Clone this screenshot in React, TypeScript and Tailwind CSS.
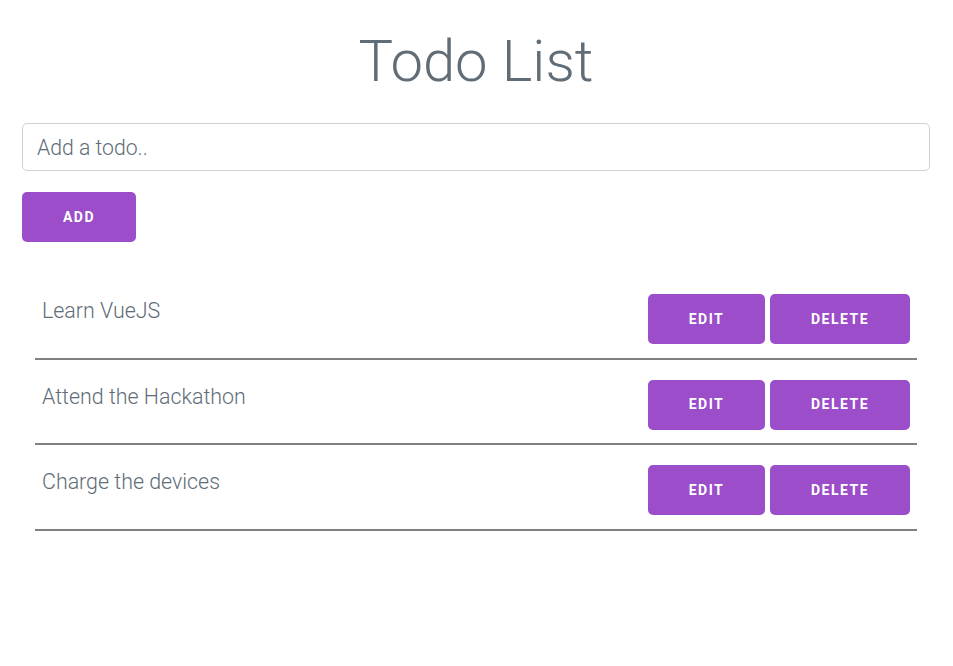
import React, { useState } from 'react';

type Todo = {
  id: number;
  text: string;
};

const initialTodos: Todo[] = [
  { id: 1, text: 'Learn VueJS' },
  { id: 2, text: 'Attend the Hackathon' },
  { id: 3, text: 'Charge the devices' },
];

const btn =
  'h-[50px] rounded-[5px] bg-[#9b4dca] text-[14px] font-bold uppercase tracking-[1.5px] text-white hover:bg-[#8a3fb8]';

const App: React.FC = () => {
  const [todos, setTodos] = useState<Todo[]>(initialTodos);
  const [draft, setDraft] = useState('');

  const handleAdd = () => {
    if (!draft.trim()) return;
    setTodos([...todos, { id: Date.now(), text: draft.trim() }]);
    setDraft('');
  };

  const handleDelete = (id: number) => {
    setTodos(todos.filter(todo => todo.id !== id));
  };

  return (
    <div className="min-h-screen bg-white font-['Roboto',sans-serif] font-light text-[#606c76]">
      <div className="pl-[22px] pr-[23px] pt-[25px]">
        <h1 className="text-center text-[58px] font-light leading-[72px] text-[#606c76]">
          Todo List
        </h1>

        <input
          value={draft}
          onChange={e => setDraft(e.target.value)}
          placeholder="Add a todo.."
          className="mt-[26px] block h-[48px] w-full rounded-[5px] border border-[#d1d1d1] px-[14px] text-[21.2px] font-light text-[#606c76] placeholder:text-[#606c76] outline-none"
        />

        <button onClick={handleAdd} className={`${btn} mt-[21px] w-[114px]`}>
          Add
        </button>

        <ul className="ml-[13px] mr-[13px] mt-[32px]">
          {todos.map(todo => (
            <li
              key={todo.id}
              className="flex items-start justify-between border-b-2 border-[#808080] px-[7px] pt-[20px] pb-[13.5px]"
            >
              <span className="pt-[3px] text-[21.4px] leading-[27px]">{todo.text}</span>
              <div className="flex gap-[5px]">
                <button className={`${btn} w-[117px]`}>Edit</button>
                <button onClick={() => handleDelete(todo.id)} className={`${btn} w-[140px]`}>
                  Delete
                </button>
              </div>
            </li>
          ))}
        </ul>
      </div>
    </div>
  );
};

export default App;
